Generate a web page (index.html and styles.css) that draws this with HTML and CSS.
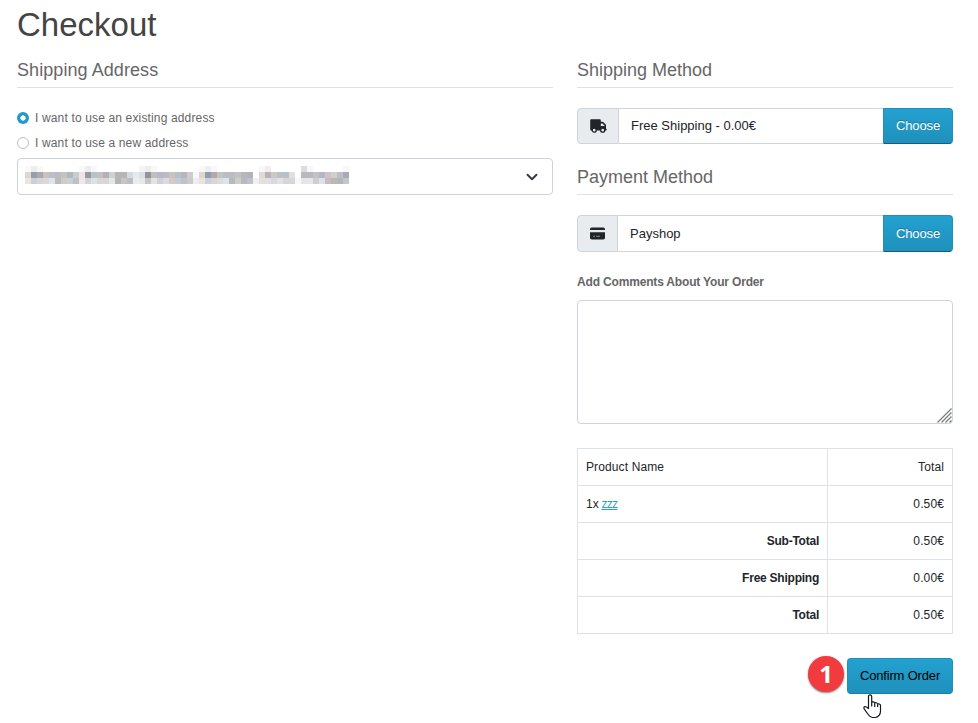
FILE: index.html
```html
<!DOCTYPE html>
<html lang="en">
<head>
<meta charset="utf-8">
<title>Checkout</title>
<link rel="stylesheet" href="styles.css">
</head>
<body>
<main class="page">
  <h1>Checkout</h1>
  <div class="columns">
    <section class="address">
      <h2>Shipping Address</h2>
      <label class="choice"><input type="radio" name="address" checked><span class="existing">I want to use an existing address</span></label>
      <label class="choice"><input type="radio" name="address"><span>I want to use a new address</span></label>
      <div class="select">
        <svg id="mosaic" width="324" height="18" viewBox="0 0 54 3" shape-rendering="crispEdges"></svg>
        <svg class="chevron" width="12" height="12" viewBox="0 0 16 16"><path d="m2 5 6 6 6-6" fill="none" stroke="#343a40" stroke-width="2.5" stroke-linecap="round" stroke-linejoin="round"/></svg>
      </div>
    </section>
    <section class="order">
      <h2>Shipping Method</h2>
      <div class="group">
        <span class="addon truck"><svg width="17" height="14" viewBox="0 0 17 14"><path fill="#212529" fill-rule="evenodd" d="M1.200.3h8.600a1 1 0 0 1 1 1v1.500h1.500c.5 0 .9.200 1.200.5l2 2c.3.3.5.7.5 1.200v3.300c.5 0 .8.400.8.900s-.4.800-.9.800H1.200a1 1 0 0 1-1-1V1.300a1 1 0 0 1 1-1zM10.800 4.500V7h3.700v-.4l-2.100-2.100z"/><circle cx="4.200" cy="11.200" r="2" fill="#e9ecef" stroke="#212529" stroke-width="1.300"/><circle cx="12.700" cy="11.200" r="2" fill="#e9ecef" stroke="#212529" stroke-width="1.300"/></svg></span>
        <span class="value">Free Shipping - 0.00€</span>
        <button class="btn choose" type="button">Choose</button>
      </div>
      <h2 class="second">Payment Method</h2>
      <div class="group tall">
        <span class="addon"><svg width="15" height="13" viewBox="0 0 15 13"><path fill="#212529" d="M1.7.5h11.6A1.7 1.7 0 0 1 15 2.2V3H0v-.8A1.7 1.7 0 0 1 1.7.5zM0 5.2h15v5.6a1.7 1.7 0 0 1-1.7 1.7H1.7A1.7 1.7 0 0 1 0 10.800z"/><path stroke="#858a8e" d="M3 9.300h2M6 9.300h4"/></svg></span>
        <span class="value">Payshop</span>
        <button class="btn choose" type="button">Choose</button>
      </div>
      <label class="comments" for="comment">Add Comments About Your Order</label>
      <div class="comment-box">
        <textarea id="comment"></textarea>
        <svg class="grip" width="15" height="15" viewBox="0 0 15 15"><path d="M.5 14.500l14-14M4.500 14.500l10-10M8.500 14.500l6-6M12.500 14.500l2-2" stroke="#777b73" stroke-width="1.200"/></svg>
      </div>
      <table>
        <tr><td>Product Name</td><td class="num">Total</td></tr>
        <tr><td>1x <a>zzz</a></td><td class="num">0.50€</td></tr>
        <tr><th>Sub-Total</th><td class="num">0.50€</td></tr>
        <tr><th>Free Shipping</th><td class="num">0.00€</td></tr>
        <tr><th>Total</th><td class="num">0.50€</td></tr>
      </table>
      <div class="actions">
        <span class="step">1</span>
        <button class="btn confirm" type="button">Confirm Order</button>
      </div>
      <svg class="hand" width="19" height="25" viewBox="0 0 19 25"><path d="M5.500 14.500V2.500c0-2.300 3.200-2.300 3.200 0v6c.6-1.200 2.900-.8 3 .7.8-1 2.800-.6 2.900 1 .9-.8 2.900-.3 2.900 1.500v5.500c0 3-2 6.300-5.300 6.300H9.500c-2 0-3.300-1.500-4.300-3L1.200 14.800c-1-1.800.7-3 2.200-1.700z" fill="#fff" stroke="#15151f" stroke-width="1.200" stroke-linejoin="round"/><path d="M8.700 8.500v4M11.700 9.500v3.500M14.600 10.500V13" fill="none" stroke="#15151f" stroke-width="1.200"/></svg>
    </section>
  </div>
</main>
<script src="mosaic.js"></script>
</body>
</html>
```
FILE: styles.css
```css
* { box-sizing: border-box; }
body {
  margin: 0;
  background: #fff;
  color: #212529;
  font: 12px/20px "Liberation Sans", Arial, sans-serif;
}
.page { width: 936px; margin-left: 17px; padding-top: 5px; }
h1 { margin: 0; height: 53px; font-size: 33px; line-height: 40px; font-weight: 400; color: #444; }
.columns { display: grid; grid-template-columns: 536px 376px; gap: 24px; }
h2 {
  margin: 0 0 20px;
  height: 30px;
  border-bottom: 1px solid #dee2e6;
  font-size: 18px;
  line-height: 24px;
  font-weight: 400;
  color: #666;
}
.address h2 { letter-spacing: .07px; }
h2.second { margin: 21px 0 20px; }
.choice { display: flex; align-items: center; height: 25px; color: #666; letter-spacing: .15px; }
.choice input {
  appearance: none;
  width: 12px;
  height: 12px;
  margin: 0 6px 0 0;
  border: 1px solid #bfbfbf;
  border-radius: 50%;
}
.choice input:checked { border: 0; background: radial-gradient(circle, #fff 2.3px, #229ac8 3px); }
.choice:first-of-type { margin-top: -3px; }
.select {
  display: flex;
  align-items: center;
  justify-content: space-between;
  height: 37px;
  margin-top: 3px;
  padding: 0 14px 0 7px;
  border: 1px solid #ced4da;
  border-radius: 4px;
}
#mosaic { display: block; position: relative; top: -2px; }
.group { display: flex; height: 36px; font-size: 13px; }
.group.tall { height: 37px; }
.addon {
  display: flex;
  align-items: center;
  justify-content: center;
  width: 41px;
  background: #e9ecef;
  border: 1px solid #ced4da;
  border-radius: 4px 0 0 4px;
}
.addon.truck { width: 42px; }
.addon svg { display: block; }
.value {
  flex: 1;
  display: flex;
  align-items: center;
  padding-left: 12px;
  border: solid #ced4da;
  border-width: 1px 0;
}
.btn {
  padding: 0;
  border: 1px solid #1f90bb;
  border-bottom-color: #145e7a;
  border-radius: 4px;
  background: linear-gradient(#23a1d1, #1f90bb);
  font: 13px/20px "Liberation Sans", Arial, sans-serif;
}
.choose { width: 70px; border-radius: 0 4px 4px 0; color: #fff; letter-spacing: -.1px; text-shadow: 0 -1px 0 rgba(0, 0, 0, .25); }
.comments { display: block; margin-top: 20px; font-weight: 700; color: #666; letter-spacing: -.17px; }
.comment-box { position: relative; height: 124px; margin: 8px 0 24px; }
textarea {
  display: block;
  width: 100%;
  height: 100%;
  border: 1px solid #ced4da;
  border-radius: 4px;
  resize: none;
}
.grip { position: absolute; right: 1px; bottom: 1px; }
table { width: 376px; border-collapse: collapse; table-layout: fixed; }
td, th { height: 37px; padding: 8px; border: 1px solid #dee2e6; text-align: left; letter-spacing: .12px; }
th { text-align: right; letter-spacing: -.24px; }
.num { width: 125px; text-align: right; }
a { color: #23a1d1; text-decoration: underline; letter-spacing: -.7px; margin-left: -1px; }
.actions { display: flex; justify-content: flex-end; gap: 3px; height: 36px; margin-top: 24px; }
.step {
  width: 36px;
  height: 36px;
  margin-top: -2px;
  border-radius: 50%;
  background: #f13b3e;
  box-shadow: 0 1px 2px rgba(0, 0, 0, .5);
  color: #fff;
  font: 700 24px/36px "Open Sans", sans-serif;
  text-align: center;
}
.confirm { width: 106px; height: 36px; border-bottom-color: #1b7fa5; color: #000; letter-spacing: -.17px; }
.hand { display: block; margin: 0 0 0 286px; }
```
FILE: mosaic.js
```js
const rows = [
  { 0: "f9f9f9", 1: "eceeee", 2: "f8f8f8", 9: "f8f8f8", 10: "ebeeee", 11: "f8f8f8", 19: "f5f5f5", 20: "eceeed", 21: "f8f8f8", 29: "f8f8f8", 30: "ecf0f0", 31: "f8f8f8", 39: "f8f8f8", 40: "f3eeee", 46: "dddddd", 47: "f2f8fc", 53: "f8f8f8" },
  "ddd8cc 9a9cb0 b0a8ac c3c5be bbc0c7 bbbdc5 c4c3c0 b2b7bd c8cdd3 efe3e4 9b999e b7c3c5 c2c0c5 b4b1b5 cbd2d2 b6b6b9 b6b6b6 d5dada e4e9f0 dedfe1 94929a c0bfbb b7bac5 bbbdc6 c9c4c0 b7bfc7 b6b6bb d0cccb f3f9ff ddd8cb 969aac b0a9ae c3c5be bbbdc5 bbbdc5 c4c2bd b3b8be b2b3b9 ffffff ddd9d3 b9b3b6 c9c9c5 bfc0c2 b8c0c9 e0e0e0 ffffff b9b8bb bab9bc c4c0c5 b3b9c4 d4c1c8 cbd3cc c0bcc3 a8acb6".split(" "),
  "ebe5df cccfdb d9d4d5 d9d8dc dfe4eb bcbbb9 cecccb cbd0d4 bfc0c5 efe7e8 d3d3dc dbe2e4 dad6d6 d9d6d7 e3e8e4 b3b3b9 cac4c3 bbbfc5 e8edf3 e8e8e8 c5c5ca e4e4e1 ced1da d9dce3 d8cac0 c0ccd8 bcc3cd cecac9 eeeeee e9e3db ccd0dc d9d5d7 dbdcdf dfe4ea b9b9b8 cdcdcd b4bac0 c0c2c9 f0f0f0 e6e0da e2dee7 d7d8e2 e0e2e5 d9d5d5 dad6d5 f3faff e6e6e6 e7e7e7 d0cdd0 dde2e8 c7bcc3 b8bab0 b0b6c4 c5c5c5".split(" ")
];
const mosaic = document.getElementById("mosaic");
rows.forEach((row, y) => {
  for (const [x, color] of Object.entries(row)) {
    const cell = document.createElementNS("http://www.w3.org/2000/svg", "rect");
    cell.setAttribute("x", x);
    cell.setAttribute("y", y);
    cell.setAttribute("width", 1);
    cell.setAttribute("height", 1);
    cell.setAttribute("fill", "#" + color);
    mosaic.append(cell);
  }
});
```
